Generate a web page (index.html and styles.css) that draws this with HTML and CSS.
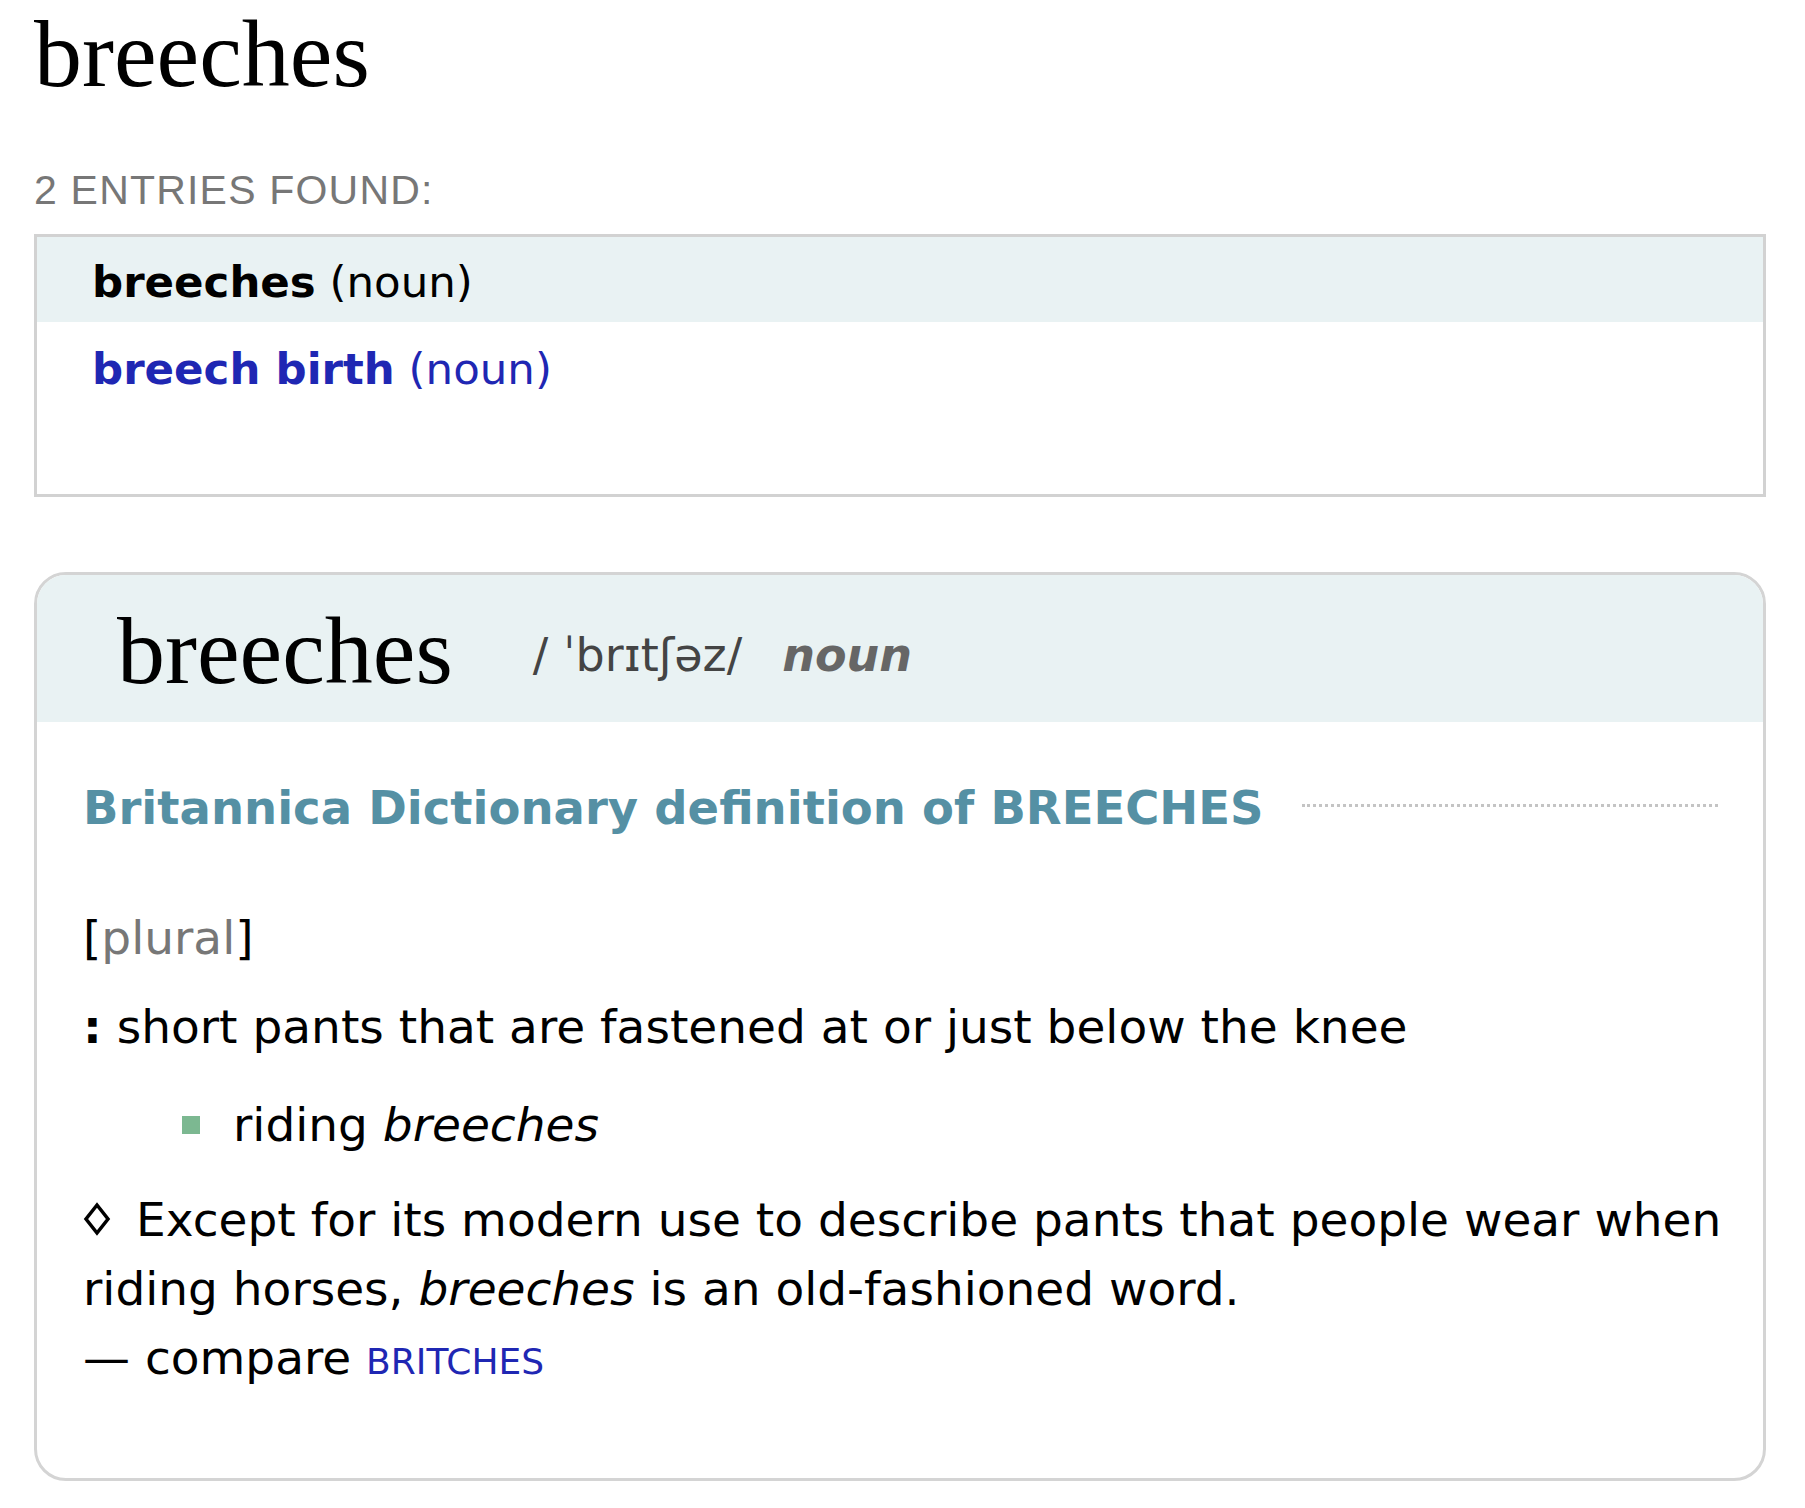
FILE: index.html
```html
<!DOCTYPE html>
<html lang="en">
<head>
    <meta charset="UTF-8">
    <meta name="viewport" content="width=device-width, initial-scale=1.0">
    <title>breeches - Britannica Dictionary</title>
    <link rel="stylesheet" href="styles.css">
</head>
<body>
<div class="page">
    <h1 class="title">breeches</h1>
    <div class="found">2 ENTRIES FOUND:</div>
    <ul class="entries">
        <li class="entry current"><b>breeches</b> (noun)</li>
        <li class="entry"><a href="#"><b>breech birth</b> (noun)</a></li>
    </ul>

    <div class="card">
        <div class="card-head"><span class="hw">breeches</span><span class="pron">/ ˈbrɪtʃəz/</span><span class="pos">noun</span></div>
        <div class="card-body">
            <div class="dict-title">
                <h2>Britannica Dictionary definition of BREECHES</h2>
                <span class="dots"></span>
            </div>
            <div class="gram">[<span>plural</span>]</div>
            <div class="sense"><b>:</b> short pants that are fastened at or just below the knee</div>
            <ul class="examples">
                <li><span class="sq"></span>riding <i>breeches</i></li>
            </ul>
            <p class="note"><svg class="diamond" width="28" height="34" viewBox="0 0 28 34"><polygon points="14,3 25,17 14,31 3,17" fill="none" stroke="#000" stroke-width="3.5"/></svg>Except for its modern use to describe pants that people wear when riding horses, <i>breeches</i> is an old-fashioned word.</p>
            <div class="compare">— compare <a href="#" class="xref">BRITCHES</a></div>
        </div>
    </div>
</div>
</body>
</html>
```

FILE: styles.css
```css
body {
    margin: 0;
    background-color: #fff;
    color: #000;
    font-family: "DejaVu Sans", Verdana, sans-serif;
}

.page {
    padding: 0 39px 0 34px;
}

a {
    color: #1f27b3;
    text-decoration: none;
}

.title {
    margin: 0;
    font-family: "Liberation Serif", "Times New Roman", serif;
    font-weight: normal;
    font-size: 96px;
    line-height: 108px;
}

.found {
    margin-top: 59px;
    font-family: "Liberation Sans", Arial, sans-serif;
    font-size: 41px;
    line-height: 46px;
    letter-spacing: 1.2px;
    color: #777;
}

/* entries list */
.entries {
    list-style: none;
    margin: 21px 0 0;
    padding: 0 0 85px;
    border: 3px solid #d2d2d2;
}

.entry {
    padding: 20px 55px 15px;
    font-size: 43.5px;
    line-height: 50px;
}

.entry + .entry {
    padding-top: 22px;
}

.entry.current {
    background-color: #e9f2f3;
}

/* definition card */
.card {
    margin-top: 75px;
    border: 3px solid #d4d4d4;
    border-radius: 32px;
    overflow: hidden;
}

.card-head {
    background-color: #e9f2f3;
    padding: 22px 0 17px 80px;
    font-family: "Liberation Serif", "Times New Roman", serif;
    font-size: 96px;
    line-height: 108px;
    white-space: nowrap;
}

.pron,
.pos {
    font-family: "DejaVu Sans", Verdana, sans-serif;
    font-size: 46px;
    line-height: normal;
    vertical-align: 12px;
}

.pron {
    margin-left: 80px;
    color: #444;
}

.pos {
    margin-left: 40px;
    color: #666;
    font-weight: bold;
    font-style: italic;
}

.card-body {
    padding: 59px 30px 82px 46px;
    font-size: 47px;
    line-height: 69px;
}

.dict-title {
    display: flex;
    align-items: center;
    margin-right: 15px;
}

.dict-title h2 {
    margin: 0;
    font-size: 46.5px;
    line-height: normal;
    color: #5590a4;
}

.dots {
    flex: 1;
    margin-left: 38px;
    margin-top: -5px;
    border-top: 3px dotted #c4c4c4;
}

.gram {
    margin-top: 68px;
}

.gram span {
    color: #777;
}

.sense {
    margin-top: 20px;
}

.examples {
    list-style: none;
    margin: 29px 0 0;
    padding-left: 99px;
}

.sq {
    display: inline-block;
    width: 18px;
    height: 18px;
    margin-right: 33px;
    vertical-align: 7px;
    background-color: #7cb891;
}

.note {
    margin: 26px 0 0;
}

.diamond {
    margin-right: 25px;
}

.xref {
    font-size: 36px;
}
```
